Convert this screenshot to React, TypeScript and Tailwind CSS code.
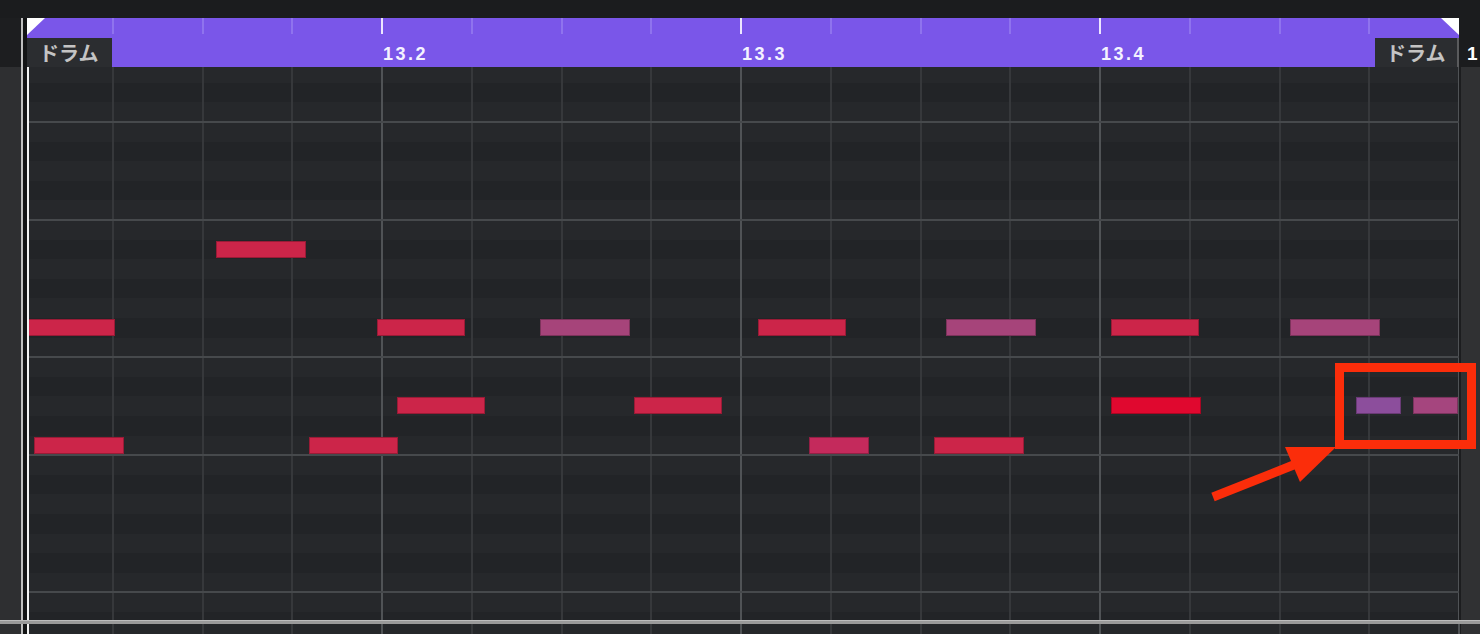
import React from "react";

// piano roll geometry (main column starts at page x = 27)
const BEAT = 89.75;
const X0 = -4;
const ROW = 19.6;
const ROW0 = 153;

const beatX = (i: number) => X0 + BEAT * i;
const BLACK = [1, 3, 6, 8, 10];
const pitchOf = (k: number) => (((11 - k) % 12) + 12) % 12;

type Note = { x1: number; x2: number; k: number; color: string };

const notes: Note[] = [
  { x1: 216, x2: 306, k: 1, color: "bg-[#cc2549]" },

  { x1: 28, x2: 115, k: 5, color: "bg-[#cc2549]" },
  { x1: 377, x2: 465, k: 5, color: "bg-[#cc2549]" },
  { x1: 540, x2: 630, k: 5, color: "bg-[#a6447a]" },
  { x1: 758, x2: 846, k: 5, color: "bg-[#cc2549]" },
  { x1: 946, x2: 1036, k: 5, color: "bg-[#a6447a]" },
  { x1: 1111, x2: 1199, k: 5, color: "bg-[#cc2549]" },
  { x1: 1290, x2: 1380, k: 5, color: "bg-[#a6447a]" },

  { x1: 397, x2: 485, k: 9, color: "bg-[#cc2549]" },
  { x1: 634, x2: 722, k: 9, color: "bg-[#cc2549]" },
  { x1: 1111, x2: 1201, k: 9, color: "bg-[#e0082f]" },
  { x1: 1356, x2: 1401, k: 9, color: "bg-[#8c4e9c]" },
  { x1: 1413, x2: 1458, k: 9, color: "bg-[#a5457e]" },

  { x1: 34, x2: 124, k: 11, color: "bg-[#cc2549]" },
  { x1: 309, x2: 398, k: 11, color: "bg-[#cc2549]" },
  { x1: 809, x2: 869, k: 11, color: "bg-[#c42a5c]" },
  { x1: 934, x2: 1024, k: 11, color: "bg-[#cc2549]" },
];

const rows = Array.from({ length: 29 }, (_, i) => i - 8);
const beats = Array.from({ length: 16 }, (_, i) => i + 1);

function BeatLines() {
  return (
    <>
      {beats.map((i) => (
        <div
          key={i}
          className={`absolute top-0 bottom-0 w-[2px] ${
            i % 4 === 0 ? "bg-[#505356]" : "bg-[#36383b]"
          }`}
          style={{ left: beatX(i) - 1 }}
        />
      ))}
    </>
  );
}

function Ruler() {
  const labels: Record<number, string> = { 4: "13.2", 8: "13.3", 12: "13.4" };
  return (
    <div className="relative h-[49px] bg-[#7a56e9]">
      {beats.slice(0, 15).map((i) => (
        <div
          key={i}
          className={`absolute top-0 h-[16px] w-[2px] ${
            i % 4 === 0 ? "bg-[#ece6ff]" : "bg-[#8f73ee]"
          }`}
          style={{ left: beatX(i) - 1 }}
        />
      ))}
      {Object.entries(labels).map(([i, t]) => (
        <span
          key={i}
          className="absolute top-[26px] text-[18px] leading-[20px] font-bold tracking-[2.5px] text-[#f4f2ff] font-['Liberation_Sans',sans-serif]"
          style={{ left: beatX(Number(i)) + 1 }}
        >
          {t}
        </span>
      ))}
      {/* locator triangles */}
      <svg className="absolute left-0 top-0" width="18" height="17">
        <polygon points="0,0 18,0 0,17" fill="#ffffff" />
      </svg>
      <svg className="absolute right-0 top-0" width="18" height="17">
        <polygon points="0,0 18,0 18,17" fill="#ffffff" />
      </svg>
      <div className="absolute left-0 bottom-0 flex h-[29px] w-[85px] items-center bg-[#2b2d30] pl-[12px]">
        <span className="text-[20px] font-bold leading-none text-[#c4c4c4] font-['Noto_Sans_CJK_JP',sans-serif]">
          ドラム
        </span>
      </div>
      <div className="absolute right-0 bottom-0 flex h-[29px] w-[84px] items-center border-r-2 border-[#5a5b5d] bg-[#2b2d30] pl-[11px]">
        <span className="text-[20px] font-bold leading-none text-[#c4c4c4] font-['Noto_Sans_CJK_JP',sans-serif]">
          ドラム
        </span>
      </div>
    </div>
  );
}

function NoteGrid() {
  return (
    <div className="relative flex-1 overflow-hidden bg-[#25272a]">
      {rows.map((k) => (
        <div
          key={k}
          className={`absolute left-0 right-0 ${
            BLACK.includes(pitchOf(k)) ? "bg-[#222427]" : "bg-[#26282b]"
          }`}
          style={{ top: ROW0 + ROW * k, height: ROW }}
        />
      ))}
      <BeatLines />
      {rows
        .filter((k) => pitchOf(k) === 11 || pitchOf(k) === 4)
        .map((k) => (
          <div
            key={k}
            className="absolute left-0 right-0 h-[2px] bg-[#46494c]"
            style={{ top: ROW0 + ROW * k - 1 }}
          />
        ))}
      {notes.map((n, i) => (
        <div
          key={i}
          className={`absolute h-[17px] ring-1 ring-inset ring-black/25 ${n.color}`}
          style={{
            left: n.x1 - 27,
            width: n.x2 - n.x1,
            top: ROW0 + ROW * n.k + 1,
          }}
        />
      ))}
      <div className="absolute left-0 top-0 bottom-0 w-[2px] bg-[#f2f2f2]" />
    </div>
  );
}

export default function App() {
  return (
    <div className="relative flex h-[634px] w-[1480px] flex-col overflow-hidden bg-[#1b1c1e]">
      <div className="h-[18px] shrink-0 bg-[#1b1c1e]" />

      {/* editor pane */}
      <div className="flex h-[602px] shrink-0">
        <div className="flex w-[21px] flex-col">
          <div className="h-[49px] bg-[#1d1e20]" />
          <div className="flex-1 bg-[#2e2f31]" />
        </div>
        <div className="w-[2px] bg-[#bfbfbf]" />
        <div className="w-[4px] bg-[#131415]" />
        <div className="flex w-[1432px] flex-col">
          <Ruler />
          <NoteGrid />
        </div>
        <div className="flex flex-1 flex-col">
          <div className="flex h-[49px] items-start bg-[#1b1c1e] pl-[8px] pt-[26px]">
            <span className="text-[19px] font-bold leading-[20px] text-white font-['Liberation_Sans',sans-serif]">
              1
            </span>
          </div>
          <div className="flex flex-1">
            <div className="w-[2px] bg-[#1c1d1f]" />
            <div className="flex-1 bg-[#303133]" />
          </div>
        </div>
      </div>

      {/* splitter */}
      <div className="h-[4px] shrink-0 border-t border-[#bdbdbd] bg-[#9a9a9a]" />

      {/* lower pane */}
      <div className="flex flex-1">
        <div className="w-[21px] bg-[#2e2f31]" />
        <div className="w-[2px] bg-[#bfbfbf]" />
        <div className="w-[4px] bg-[#131415]" />
        <div className="relative w-[1432px] bg-[#25272a]">
          <BeatLines />
          <div className="absolute left-0 top-0 bottom-0 w-[2px] bg-[#f2f2f2]" />
        </div>
        <div className="flex flex-1">
          <div className="w-[2px] bg-[#1c1d1f]" />
          <div className="flex-1 bg-[#303133]" />
        </div>
      </div>

      {/* annotation */}
      <svg
        className="pointer-events-none absolute left-0 top-0"
        width="1480"
        height="634"
      >
        <rect
          x="1339.5"
          y="367.5"
          width="132"
          height="77"
          fill="none"
          stroke="#fb2d0a"
          strokeWidth="9"
        />
        <line
          x1="1213"
          y1="497"
          x2="1296"
          y2="464"
          stroke="#fb2d0a"
          strokeWidth="9"
        />
        <polygon points="1336,447 1285,447 1300,482" fill="#fb2d0a" />
      </svg>
    </div>
  );
}
